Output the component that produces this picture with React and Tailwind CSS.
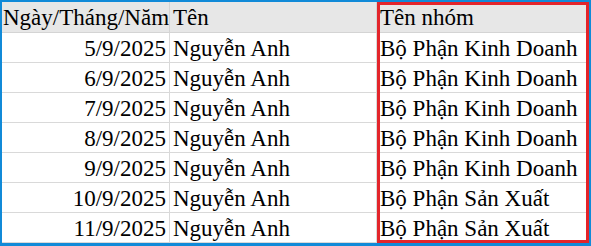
const rows = [
  ['5/9/2025', 'Nguyễn Anh', 'Bộ Phận Kinh Doanh'],
  ['6/9/2025', 'Nguyễn Anh', 'Bộ Phận Kinh Doanh'],
  ['7/9/2025', 'Nguyễn Anh', 'Bộ Phận Kinh Doanh'],
  ['8/9/2025', 'Nguyễn Anh', 'Bộ Phận Kinh Doanh'],
  ['9/9/2025', 'Nguyễn Anh', 'Bộ Phận Kinh Doanh'],
  ['10/9/2025', 'Nguyễn Anh', 'Bộ Phận Sản Xuất'],
  ['11/9/2025', 'Nguyễn Anh', 'Bộ Phận Sản Xuất'],
];

export default function App() {
  return (
    <div
      className="w-[591px] h-[246px] bg-[#118ad8] pt-[2px] pl-[2px] pr-[2px] pb-[3px] text-black text-[23px] leading-[23px] whitespace-nowrap"
      style={{ fontFamily: '"Liberation Serif", "Times New Roman", serif' }}
    >
      <div className="relative w-[587px] h-[241px] bg-white">
        {/* header row */}
        <div className="flex h-[31px] bg-[#e7e7e7] border-b border-[#d4d4d4]">
          <div className="w-[168px] flex items-end pl-[1px] pb-[3px] overflow-hidden border-r border-[#d4d4d4]">
            Ngày/Tháng/Năm
          </div>
          <div className="w-[207px] flex items-end pl-[3px] pb-[3px] border-r border-[#d4d4d4]">
            Tên
          </div>
          <div className="flex-1 flex items-end pl-[3px] pb-[3px]">Tên nhóm</div>
        </div>

        {rows.map(([date, name, group]) => (
          <div key={date} className="flex h-[30px] border-b border-[#d9d9d9]">
            <div className="w-[168px] flex items-end justify-end pr-[3px] pb-[2px] border-r border-[#d9d9d9]">
              {date}
            </div>
            <div className="w-[207px] flex items-end pl-[3px] pb-[2px] border-r border-[#d9d9d9]">
              {name}
            </div>
            <div className="flex-1 flex items-end pl-[3px] pb-[2px] overflow-hidden">{group}</div>
          </div>
        ))}

        {/* selection highlight */}
        <div className="absolute left-[375px] top-0 w-[212px] h-[241px] border-[3px] border-[#e3252b] pointer-events-none" />
      </div>
    </div>
  );
}
